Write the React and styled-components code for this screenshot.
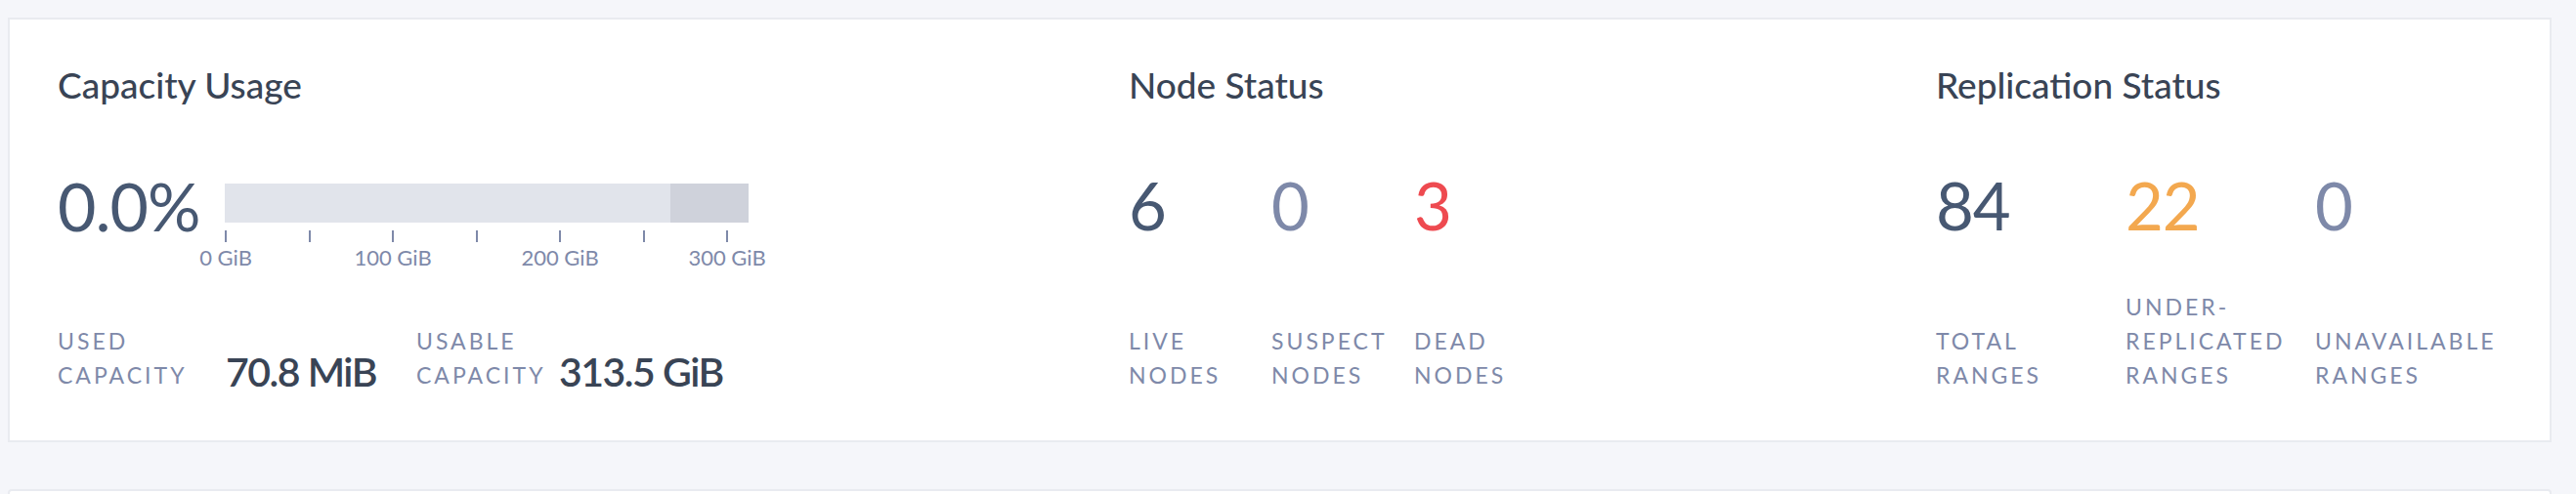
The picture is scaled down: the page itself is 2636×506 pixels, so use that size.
import React from 'react';
import styled, { createGlobalStyle } from 'styled-components';

const GlobalStyle = createGlobalStyle`
  html, body { margin: 0; padding: 0; background: #f5f6fa; }
  body { font-family: Lato, "Noto Sans", sans-serif; -webkit-font-smoothing: antialiased; }
`;

const Page = styled.div`
  box-sizing: border-box;
  height: 506px;
  overflow: hidden;
  padding: 18px 25px 0 8px;
`;

const Card = styled.section`
  background: #ffffff;
  border: 2px solid #e9ebf0;
  padding: 45px 49px 49px;
  display: grid;
  grid-template-columns: 1096px 826px 1fr;
`;

const NextCard = styled.section`
  margin-top: 48px;
  height: 60px;
  background: #ffffff;
  border: 2px solid #e9ebf0;
  border-radius: 4px;
`;

const Section = styled.div`
  display: flex;
  flex-direction: column;
`;

const Heading = styled.h2`
  margin: 0 0 68px;
  font-size: 37px;
  line-height: 44px;
  font-weight: 500;
  color: #394455;
  white-space: nowrap;
`;

const Body = styled.div`
  height: 225px;
  display: flex;
  flex-direction: column;
  justify-content: space-between;
`;

const GaugeRow = styled.div`
  display: flex;
  align-items: flex-start;
`;

const Percent = styled.div`
  width: 171px;
  font-size: 68px;
  line-height: 68px;
  letter-spacing: -1px;
  color: #475872;
`;

const BarWrap = styled.div`
  margin-top: 11px;
  width: 536px;
`;

const Bar = styled.div`
  height: 40px;
  background: #e1e4eb;
  display: flex;
  justify-content: flex-end;
`;

const BarSegment = styled.div`
  height: 100%;
  background: #cfd2db;
`;

const Axis = styled.div`
  position: relative;
  margin-top: 8px;
  height: 44px;
`;

const Tick = styled.span`
  position: absolute;
  top: 0;
  width: 2px;
  height: 12px;
  background: #7e89a9;
`;

const TickLabel = styled.span`
  position: absolute;
  top: 14px;
  transform: translateX(-50%);
  font-size: 22px;
  line-height: 28px;
  color: #7e89a9;
  white-space: nowrap;
`;

const UsageGrid = styled.div`
  display: grid;
  grid-template-columns: 172px 195px 146px auto;
  align-items: end;
`;

const Label = styled.div`
  font-size: 23px;
  line-height: 35px;
  letter-spacing: 3px;
  text-transform: uppercase;
  color: #7e89a9;
  white-space: nowrap;
`;

const LabelLine = styled.span`
  display: block;
`;

const Value = styled.div`
  font-size: 41px;
  line-height: 1;
  font-weight: 600;
  letter-spacing: -1.5px;
  color: #394455;
  white-space: nowrap;
  transform: translateY(-1px);
`;

const StatGrid = styled.div`
  height: 225px;
  display: grid;
  grid-template-columns: repeat(3, ${(p) => p.$col}px);
`;

const StatCol = styled.div`
  display: flex;
  flex-direction: column;
  justify-content: space-between;
`;

const BigNumber = styled.div`
  font-size: 67px;
  line-height: 67px;
  letter-spacing: -1px;
  color: ${(p) => p.$color};
`;

const COLORS = {
  main: '#475872',
  muted: '#7e89a9',
  danger: '#ee4a50',
  warning: '#f3a84f',
};

const StatLabel = ({ lines }) => (
  <Label>
    {lines.map((l) => (
      <LabelLine key={l}>{l}</LabelLine>
    ))}
  </Label>
);

const PX_PER_GIB = 1.71;
const ticks = [0, 50, 100, 150, 200, 250, 300];
const tickLabels = [0, 100, 200, 300];

const CapacityUsage = () => (
  <Section>
    <Heading>Capacity Usage</Heading>
    <Body>
      <GaugeRow>
        <Percent>0.0%</Percent>
        <BarWrap>
          <Bar>
            <BarSegment style={{ width: 80 }} />
          </Bar>
          <Axis>
            {ticks.map((t) => (
              <Tick key={t} style={{ left: t * PX_PER_GIB }} />
            ))}
            {tickLabels.map((t) => (
              <TickLabel key={t} style={{ left: t * PX_PER_GIB + 1 }}>
                {t} GiB
              </TickLabel>
            ))}
          </Axis>
        </BarWrap>
      </GaugeRow>
      <UsageGrid>
        <StatLabel lines={['Used', 'Capacity']} />
        <Value>70.8 MiB</Value>
        <StatLabel lines={['Usable', 'Capacity']} />
        <Value>313.5 GiB</Value>
      </UsageGrid>
    </Body>
  </Section>
);

const StatSection = ({ title, col, stats }) => (
  <Section>
    <Heading>{title}</Heading>
    <StatGrid $col={col}>
      {stats.map((s) => (
        <StatCol key={s.lines.join('-')}>
          <BigNumber $color={s.color}>{s.value}</BigNumber>
          <StatLabel lines={s.lines} />
        </StatCol>
      ))}
    </StatGrid>
  </Section>
);

export default function App() {
  return (
    <>
      <GlobalStyle />
      <Page>
        <Card>
          <CapacityUsage />
          <StatSection
            title="Node Status"
            col={146}
            stats={[
              { value: 6, color: COLORS.main, lines: ['Live', 'Nodes'] },
              { value: 0, color: COLORS.muted, lines: ['Suspect', 'Nodes'] },
              { value: 3, color: COLORS.danger, lines: ['Dead', 'Nodes'] },
            ]}
          />
          <StatSection
            title="Replication Status"
            col={194}
            stats={[
              { value: 84, color: COLORS.main, lines: ['Total', 'Ranges'] },
              { value: 22, color: COLORS.warning, lines: ['Under-', 'Replicated', 'Ranges'] },
              { value: 0, color: COLORS.muted, lines: ['Unavailable', 'Ranges'] },
            ]}
          />
        </Card>
        <NextCard />
      </Page>
    </>
  );
}
